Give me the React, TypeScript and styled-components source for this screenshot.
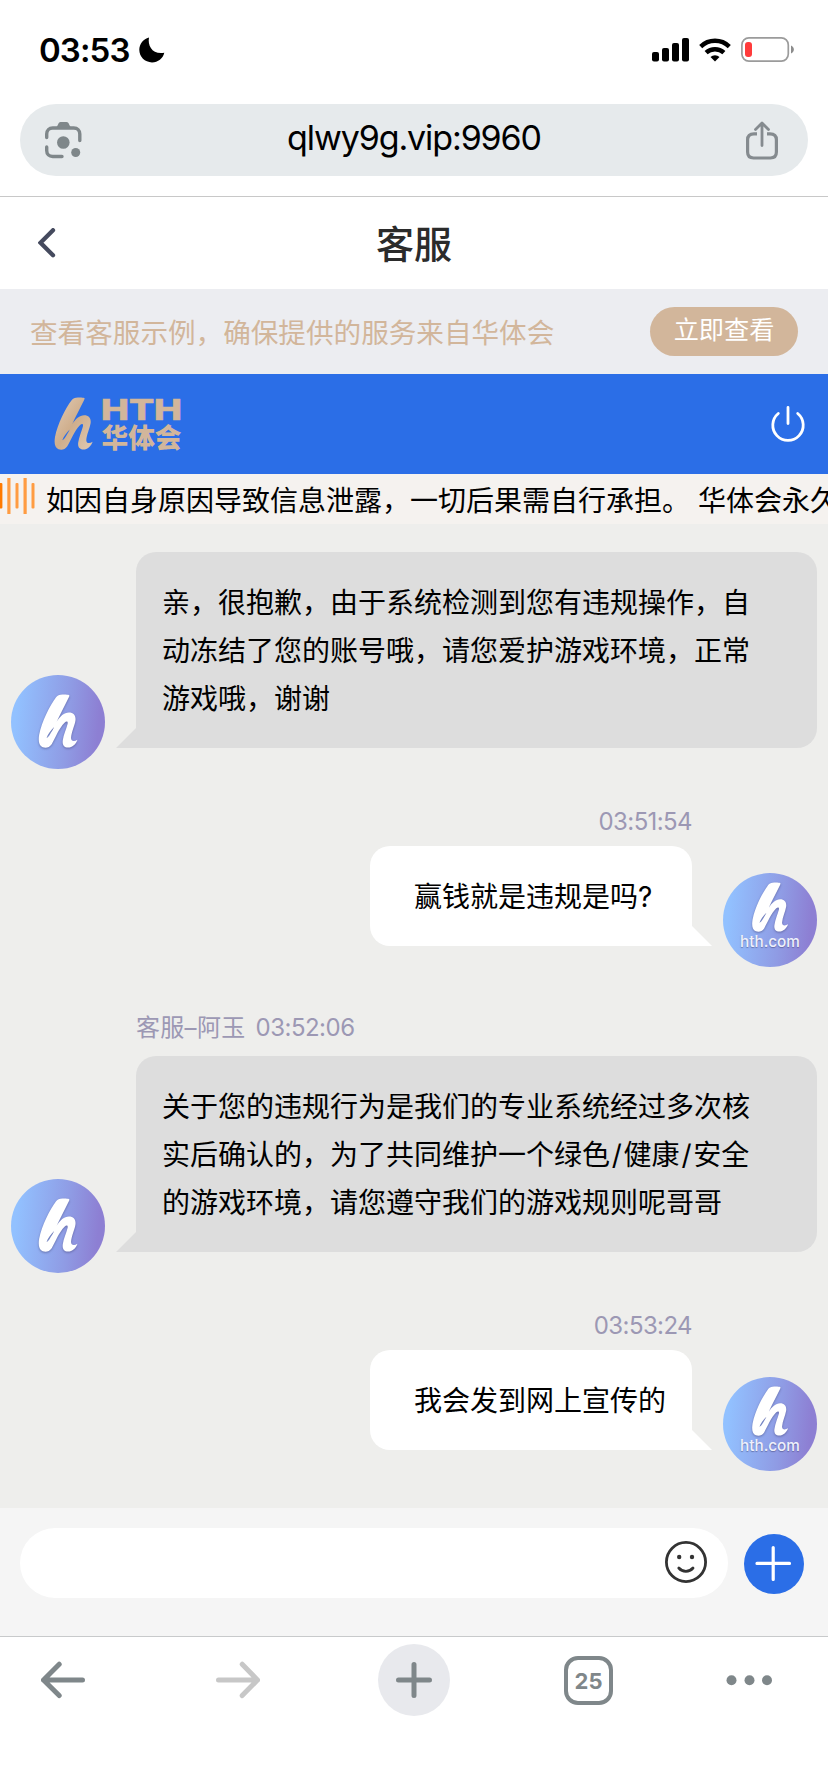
import React from "react";
import styled, { createGlobalStyle, css } from "styled-components";

const GlobalStyle = createGlobalStyle`
  * { box-sizing: border-box; }
  body {
    margin: 0;
    background: #fff;
    font-family: Inter, "Noto Sans CJK SC", sans-serif;
    color: #000;
  }
  svg { display: block; flex: none; }
`;

const Screen = styled.div`
  width: 828px;
  height: 1792px;
  display: flex;
  flex-direction: column;
  overflow: hidden;
  background: #fff;
`;

const StatusBar = styled.header`
  height: 104px;
  padding: 0 34px 5px 39px;
  display: flex;
  align-items: center;
`;

const Clock = styled.span`
  width: 100px;
  font-size: 33px;
  font-weight: 600;
  line-height: 40px;
  letter-spacing: -0.9px;
  white-space: nowrap;
`;

const StatusIcons = styled.div`
  margin-left: auto;
  display: flex;
  align-items: center;
  gap: 10px;
`;

const AddressArea = styled.div`
  height: 93px;
  padding: 0 20px;
  border-bottom: 1px solid #c8c8c8;
`;

const AddressPill = styled.div`
  height: 72px;
  padding: 0 30px 0 25px;
  border-radius: 36px;
  background: #e6eaec;
  display: flex;
  align-items: center;
  justify-content: space-between;
`;

const Url = styled.span`
  font-size: 34px;
  line-height: 40px;
  letter-spacing: -1.1px;
  margin-top: -4px;
`;

const TitleBar = styled.div`
  height: 92px;
  padding: 0 38px;
  display: grid;
  grid-template-columns: 60px 1fr 60px;
  align-items: center;
`;

const Title = styled.h1`
  margin: -2px 0 0;
  font-family: "Noto Sans CJK SC", sans-serif;
  font-size: 38px;
  font-weight: 500;
  line-height: 50px;
  text-align: center;
  color: #2b2b2b;
`;

const Banner = styled.div`
  height: 85px;
  padding: 0 30px;
  background: #ecedf1;
  display: flex;
  align-items: center;
  justify-content: space-between;
`;

const BannerText = styled.span`
  margin-top: 2px;
  font-size: 27.6px;
  line-height: 40px;
  color: #d2b69b;
`;

const BannerButton = styled.button`
  width: 148px;
  height: 49px;
  padding: 0 0 3px;
  border: 0;
  border-radius: 25px;
  background: #d2b69b;
  color: #fff;
  font: inherit;
  font-size: 25.2px;
  line-height: 40px;
`;

const BrandBar = styled.div`
  height: 100px;
  padding: 0 22px 0 53px;
  background: #2b6ee7;
  display: flex;
  align-items: center;
  justify-content: space-between;
`;

const Notice = styled.div`
  height: 50px;
  background: #f5f2ef;
  display: flex;
  overflow: hidden;
`;

const NoticeText = styled.span`
  margin-left: 11px;
  font-size: 28px;
  line-height: 54px;
  white-space: pre;
`;

const ChatArea = styled.main`
  height: 984px;
  padding-top: 10px;
  background: #eeeeec;
`;

const MessageList = styled.div`
  height: 974px;
  overflow: hidden;
  display: flex;
  flex-direction: column;
  justify-content: flex-end;
  padding-bottom: 58px;
`;

const Message = styled.section<{ $mine?: boolean }>`
  flex: none;
  display: grid;
  column-gap: 31px;
  ${(p) =>
    p.$mine
      ? css`
          grid-template-columns: 322px 94px;
          justify-content: end;
          padding-right: 11px;
        `
      : css`
          grid-template-columns: 94px 681px;
          padding-left: 11px;
        `}
`;

const Gap = styled.div<{ $size: number }>`
  flex: none;
  height: ${(p) => p.$size}px;
`;

const Meta = styled.div<{ $mine?: boolean; $line?: number }>`
  grid-column: ${(p) => (p.$mine ? 1 : 2)};
  height: 40px;
  font-size: 24px;
  line-height: ${(p) => p.$line ?? (p.$mine ? 32 : 24)}px;
  letter-spacing: ${(p) => (p.$mine ? -0.6 : 0.3)}px;
  text-align: ${(p) => (p.$mine ? "right" : "left")};
  color: #9c98b4;
  white-space: nowrap;
`;

const MetaTime = styled.span`
  margin-left: 10px;
  letter-spacing: -0.5px;
`;

const Slash = styled.span`
  margin: 0 1.75px;
`;

const Bubble = styled.div<{ $mine?: boolean }>`
  position: relative;
  grid-row: 2;
  grid-column: ${(p) => (p.$mine ? 1 : 2)};
  padding: ${(p) => (p.$mine ? "27px 20px 25px 44px" : "27px 0 25px 26px")};
  border-radius: ${(p) => (p.$mine ? "20px 20px 0 20px" : "20px 20px 20px 0")};
  background: ${(p) => (p.$mine ? "#fff" : "#ddd")};
  font-size: 28px;
  line-height: 48px;
  white-space: pre;

  &::after {
    content: "";
    position: absolute;
    bottom: 0;
    width: 20px;
    height: 20px;
    background: inherit;
    ${(p) =>
      p.$mine
        ? "left: 100%; clip-path: polygon(0 0, 100% 100%, 0 100%);"
        : "right: 100%; clip-path: polygon(100% 0, 100% 100%, 0 100%);"}
  }
`;

const Avatar = styled.div<{ $mine?: boolean }>`
  grid-row: 2;
  grid-column: ${(p) => (p.$mine ? 2 : 1)};
  align-self: end;
  width: 94px;
  height: 94px;
  margin-bottom: -21px;
  border-radius: 50%;
  background: linear-gradient(95deg, #92c1ff 8%, #8f9be4 60%, #8d7fd3 90%);
  display: flex;
  flex-direction: column;
  align-items: center;
  padding-top: ${(p) => (p.$mine ? 9 : 19)}px;
  color: #fff;

  svg { filter: drop-shadow(0 1px 1px rgba(60, 60, 110, 0.5)); }
`;

const AvatarLabel = styled.span`
  margin-top: 2px;
  font-size: 15.3px;
  font-weight: 500;
  line-height: 16px;
  color: #eef0fb;
  text-shadow: 0 1px 1px rgba(60, 60, 110, 0.5);
`;

const InputBar = styled.div`
  height: 129px;
  padding: 20px 24px 0 20px;
  border-bottom: 1px solid #c8cacb;
  background: #f5f5f5;
  display: flex;
  align-items: flex-start;
  gap: 16px;
`;

const InputPill = styled.div`
  flex: 1;
  height: 70px;
  padding: 0 21px 2px;
  border-radius: 35px;
  background: #fff;
  display: flex;
  align-items: center;
  justify-content: flex-end;
`;

const AddButton = styled.button`
  width: 60px;
  height: 60px;
  margin-top: 6px;
  padding: 0;
  border: 0;
  border-radius: 50%;
  background: #2b6ee7;
`;

const Toolbar = styled.nav`
  height: 86px;
  padding-left: 41px;
  display: grid;
  grid-template-columns: 175px 162px 186px 162px 1fr;
  align-items: center;
`;

const NewTab = styled.div`
  width: 72px;
  height: 72px;
  border-radius: 50%;
  background: #e8e9ed;
  display: flex;
  align-items: center;
  justify-content: center;
`;

const TabCount = styled.div`
  width: 49px;
  height: 49px;
  border: 4px solid #7f878a;
  border-radius: 14px;
  font-size: 22px;
  font-weight: 700;
  line-height: 43px;
  text-align: center;
  color: #7f878a;
`;

const GREY = "#7f878a";

const HMark = ({ width, height, fill = "#fff" }: { width: number; height: number; fill?: string }) => (
  <svg width={width} height={height} viewBox="0 0 39 53" fill="none">
    <path
      fill={fill}
      fillRule="evenodd"
      d="M22 .8C25 .2 28.5.4 30.3 1c.6.3.3 1.300-.4 2.600C26.500 10.500 21.500 20 18.200 27.200 21.500 22 25.500 18.200 30.200 18.200 35 18.200 37.300 21.600 36.600 26.200 35.800 31 32.700 37.500 32.300 43 32.200 46.500 35.500 46.800 38.600 44.800 37.300 49 33.500 52.600 29.300 52.600 25.200 52.600 23.600 49.600 24.200 45.500 25 40 27.600 34.500 28.900 29.500 29.500 26.500 27.800 26.200 25.900 28.200 20.200 34 17.300 42.500 13.300 49.200 11 52.600 7.500 53.300 4.500 52.200.5 50.600.1 45.500 1 40 3.500 27 11.500 11.300 17.600 3.200 18.800 1.700 20.300 1.200 22 .8ZM15.700 32.500C12.700 35.800 9.500 39.300 8.300 43.300 9.600 42.600 10.400 41.800 11.300 40.300 13 37.400 14.600 35.200 15.700 32.500Z"
    />
  </svg>
);

const AgentAvatar = () => (
  <Avatar>
    <HMark width={40} height={54} />
  </Avatar>
);

const UserAvatar = () => (
  <Avatar $mine>
    <HMark width={38} height={50} />
    <AvatarLabel>hth.com</AvatarLabel>
  </Avatar>
);

const BrandLogo = () => (
  <svg width="130" height="56" viewBox="0 0 130 56" overflow="visible">
    <defs>
      <linearGradient id="gold" x1="0" y1="0" x2="1" y2="1">
        <stop offset="0" stopColor="#e2cbb5" />
        <stop offset="0.5" stopColor="#cfae8c" />
        <stop offset="1" stopColor="#e0c9b3" />
      </linearGradient>
    </defs>
    <svg x="1" y="1" width="39" height="53" viewBox="0 0 39 53">
      <HMark width={39} height={53} fill="url(#gold)" />
    </svg>
    <text
      x="48"
      y="24.300"
      fontFamily="Inter, sans-serif"
      fontWeight="800"
      fontSize="28.500"
      textLength="81"
      lengthAdjust="spacingAndGlyphs"
      fill="#d2b69b"
      stroke="#d2b69b"
      strokeWidth="0.600"
    >
      HTH
    </text>
    <text
      x="48.500"
      y="51.500"
      fontFamily="Noto Sans CJK SC, sans-serif"
      fontWeight="900"
      fontSize="27"
      textLength="80"
      lengthAdjust="spacingAndGlyphs"
      fill="#d2b69b"
    >
      华体会
    </text>
  </svg>
);

const MoonIcon = () => (
  <svg width="26" height="26" viewBox="0 0 26 26">
    <path d="M10 .4C8.400 8.500 13.500 18 25.300 15.800 24 21.500 19 25.400 13 25.400 5.800 25.400.3 19.800.3 12.800.3 7 4.300 1.800 10 .4Z" />
  </svg>
);

const SignalIcon = () => (
  <svg width="37" height="24" viewBox="0 0 37 24">
    <rect x="0" y="14" width="7" height="9.500" rx="2" />
    <rect x="10" y="10" width="7" height="13.500" rx="2" />
    <rect x="20" y="5" width="7" height="18.500" rx="2" />
    <rect x="30" y="0" width="7" height="23.500" rx="2" />
  </svg>
);

const WifiIcon = () => (
  <svg width="32" height="24" viewBox="0 0 32 24" fill="none" stroke="#000" strokeWidth="4.400">
    <path d="M1.700 8.600a20.500 20.500 0 0 1 28.600 0" />
    <path d="M7.100 14.700a13 13 0 0 1 17.800 0" />
    <path d="M16 23.600l-4.500-4.500a6.500 6.500 0 0 1 9 0Z" fill="#000" stroke="none" />
  </svg>
);

const BatteryIcon = () => (
  <svg width="53" height="25" viewBox="0 0 53 25">
    <rect x=".9" y=".9" width="46.400" height="23.200" rx="7" fill="none" stroke="#9b9b9b" strokeWidth="1.700" />
    <rect x="4" y="5" width="7" height="15" rx="3" fill="#ff3b3b" />
    <path d="M50 8.500c3.800 1.400 3.800 6.600 0 8Z" fill="#8c8c8c" />
  </svg>
);

const LensIcon = () => (
  <svg width="37" height="38" viewBox="0 0 37 38" fill="none" stroke={GREY} strokeWidth="3.400" strokeLinecap="round">
    <path d="M1.700 16.500V13c0-3.600 2.400-6 6-6h21.100c3.600 0 6 2.400 6 6v6.500" />
    <path d="M1.700 26v3.500c0 3.600 2.400 6 6 6H17" />
    <path d="M11 6.500C13 5.500 13 1 15.500 1h6C24.500 1 24 5.500 26.500 6.500Z" fill={GREY} stroke="none" />
    <circle cx="18.300" cy="21.500" r="6.300" fill={GREY} stroke="none" />
    <circle cx="30.700" cy="31.500" r="4.500" fill={GREY} stroke="none" />
  </svg>
);

const ShareIcon = () => (
  <svg width="32" height="39" viewBox="0 0 32 39" fill="none" stroke="#858b8f" strokeWidth="3.200">
    <path d="M11 12.800H8c-4 0-6.400 2.200-6.400 6V31c0 3.800 2.200 6 6 6h16.800c3.800 0 6-2.200 6-6V18.800c0-3.800-2.400-6-6.400-6h-3" />
    <path d="M16 24.500V2.500M9.500 8.500 16 2l6.500 6.500" strokeWidth="2.800" strokeLinecap="round" strokeLinejoin="round" />
  </svg>
);

const BackChevron = () => (
  <svg width="18" height="30" viewBox="0 0 18 30" fill="none" stroke="#454a5e" strokeWidth="4.300" strokeLinecap="round">
    <path d="M15 2.200 2.500 14.700 15 27.200" />
  </svg>
);

const PowerIcon = () => (
  <svg width="36" height="40" viewBox="0 0 36 40" fill="none" stroke="#fff" strokeWidth="2.800" strokeLinecap="round">
    <path d="M18 3.500v16M8.300 9.500a15.200 15.200 0 1 0 19.400 0" />
  </svg>
);

const SoundBars = () => (
  <svg width="35" height="50" viewBox="0 0 35 50" fill="#ff9c42">
    <rect x="-1" y="9" width="3.400" height="25.500" rx="1" fill="#ff7a00" />
    <rect x="7.300" y="4" width="3.200" height="36" />
    <rect x="15.500" y="9" width="3" height="25.500" rx="1" />
    <rect x="23.500" y="4" width="3.200" height="36" />
    <rect x="31.500" y="9" width="3" height="25.500" rx="1" />
  </svg>
);

const SmileIcon = () => (
  <svg width="42" height="42" viewBox="0 0 42 42" fill="none" stroke="#333" strokeWidth="2.800" strokeLinecap="round">
    <circle cx="21" cy="21" r="19.600" />
    <circle cx="14.200" cy="16" r="2.200" fill="#333" stroke="none" />
    <circle cx="27" cy="16" r="2.200" fill="#333" stroke="none" />
    <path d="M13.800 27c3.800 4.400 10.400 4.400 14.200 0" />
  </svg>
);

const Arrow = ({ color, flip }: { color: string; flip?: boolean }) => (
  <svg width="44" height="38" viewBox="0 0 44 38" fill="none" stroke={color} strokeWidth="5" strokeLinecap="round" strokeLinejoin="round">
    <path d={flip ? "M2.500 19H41.500M26.200 3.200 41.500 19 26.200 34.600" : "M41.500 19H2.500M18.200 3.200 2.500 19 18.200 34.600"} />
  </svg>
);

export default function App() {
  return (
    <>
      <GlobalStyle />
      <Screen>
        <StatusBar>
          <Clock>03:53</Clock>
          <MoonIcon />
          <StatusIcons>
            <SignalIcon />
            <WifiIcon />
            <BatteryIcon />
          </StatusIcons>
        </StatusBar>

        <AddressArea>
          <AddressPill>
            <LensIcon />
            <Url>qlwy9g.vip:9960</Url>
            <ShareIcon />
          </AddressPill>
        </AddressArea>

        <TitleBar>
          <BackChevron />
          <Title>客服</Title>
        </TitleBar>

        <Banner>
          <BannerText>查看客服示例，确保提供的服务来自华体会</BannerText>
          <BannerButton>立即查看</BannerButton>
        </Banner>

        <BrandBar>
          <BrandLogo />
          <PowerIcon />
        </BrandBar>

        <Notice>
          <SoundBars />
          <NoticeText>如因自身原因导致信息泄露，一切后果需自行承担。 华体会永久</NoticeText>
        </Notice>

        <ChatArea>
          <MessageList>
            <Message>
              <Meta $line={21}>客服–阿玉</Meta>
              <AgentAvatar />
              <Bubble>{"亲，很抱歉，由于系统检测到您有违规操作，自\n动冻结了您的账号哦，请您爱护游戏环境，正常\n游戏哦，谢谢"}</Bubble>
            </Message>
            <Gap $size={58} />
            <Message $mine>
              <Meta $mine>03:51:54</Meta>
              <Bubble $mine>赢钱就是违规是吗?</Bubble>
              <UserAvatar />
            </Message>
            <Gap $size={70} />
            <Message>
              <Meta>
                客服–阿玉<MetaTime>03:52:06</MetaTime>
              </Meta>
              <AgentAvatar />
              <Bubble>
                {"关于您的违规行为是我们的专业系统经过多次核\n实后确认的，为了共同维护一个绿色"}
                <Slash>/</Slash>健康<Slash>/</Slash>
                {"安全\n的游戏环境，请您遵守我们的游戏规则呢哥哥"}
              </Bubble>
            </Message>
            <Gap $size={58} />
            <Message $mine>
              <Meta $mine>03:53:24</Meta>
              <Bubble $mine>我会发到网上宣传的</Bubble>
              <UserAvatar />
            </Message>
          </MessageList>
        </ChatArea>

        <InputBar>
          <InputPill>
            <SmileIcon />
          </InputPill>
          <AddButton>
            <svg width="60" height="60" viewBox="0 0 60 60" stroke="#fff" strokeWidth="3.200" strokeLinecap="round">
              <path d="M29.200 13.500V45.500M13 29.400H45.500" />
            </svg>
          </AddButton>
        </InputBar>

        <Toolbar>
          <Arrow color={GREY} />
          <Arrow color="#c7c7c7" flip />
          <NewTab>
            <svg width="38" height="38" viewBox="0 0 38 38" stroke={GREY} strokeWidth="5" strokeLinecap="round">
              <path d="M19 3.500V34.500M3.500 19H34.500" />
            </svg>
          </NewTab>
          <TabCount>25</TabCount>
          <svg width="47" height="12" viewBox="0 0 47 12" fill={GREY}>
            <circle cx="5.500" cy="6.300" r="5" />
            <circle cx="23.500" cy="6.300" r="5" />
            <circle cx="41" cy="6.300" r="5" />
          </svg>
        </Toolbar>
      </Screen>
    </>
  );
}
